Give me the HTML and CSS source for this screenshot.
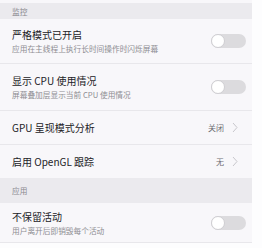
FILE: index.html
```html
<!DOCTYPE html>
<html lang="zh">
<head>
<meta charset="utf-8">
<link rel="stylesheet" href="styles.css">
</head>
<body>
<div class="page">
  <div class="list">
    <div class="top-gap"></div>
    <div class="section h1">监控</div>
    <div class="row r-tall">
      <div class="texts">
        <div class="title">严格模式已开启</div>
        <div class="sub">应用在主线程上执行长时间操作时闪烁屏幕</div>
      </div>
      <div class="toggle"><span class="knob"></span></div>
    </div>
    <div class="row r-tall2">
      <div class="texts">
        <div class="title">显示 CPU 使用情况</div>
        <div class="sub">屏幕叠加层显示当前 CPU 使用情况</div>
      </div>
      <div class="toggle"><span class="knob"></span></div>
    </div>
    <div class="row r-short">
      <div class="texts"><div class="title">GPU 呈现模式分析</div></div>
      <div class="value">关闭</div>
      <svg class="chev" viewBox="0 0 6 11" width="6" height="11"><path d="M1 1 L5 5.5 L1 10" fill="none" stroke="#c8c7cc" stroke-width="1"/></svg>
    </div>
    <div class="row r-short2 noborder">
      <div class="texts"><div class="title">启用 OpenGL 跟踪</div></div>
      <div class="value">无</div>
      <svg class="chev" viewBox="0 0 6 11" width="6" height="11"><path d="M1 1 L5 5.5 L1 10" fill="none" stroke="#c8c7cc" stroke-width="1"/></svg>
    </div>
    <div class="section h2">应用</div>
    <div class="row r-last">
      <div class="texts">
        <div class="title">不保留活动</div>
        <div class="sub">用户离开后即销毁每个活动</div>
      </div>
      <div class="toggle"><span class="knob"></span></div>
    </div>
  </div>
</div>
</body>
</html>
```
FILE: styles.css
```css
html, body {
  margin: 0;
  padding: 0;
  background: #fdfdfe;
}
body {
  font-family: "Noto Sans CJK SC", "Noto Sans", sans-serif;
  width: 262px;
  height: 248px;
  overflow: hidden;
}
.page {
  display: flex;
}
.list {
  width: 252px;
  background: #f8f7fa;
  display: flex;
  flex-direction: column;
}
.top-gap {
  height: 3px;
}
.section {
  background: #ebeaee;
  color: #8a898e;
  font-size: 7.7px;
  padding-left: 12px;
  display: flex;
  align-items: center;
}
.h1 { height: 16px; }
.h2 { height: 25px; }
.row {
  display: flex;
  align-items: center;
  padding: 0 16px 0 12px;
  border-bottom: 1px solid #e8e7eb;
  box-sizing: border-box;
}
.row.noborder { border-bottom: none; }
.r-tall { height: 45px; }
.r-tall2 { height: 47px; }
.r-short { height: 34px; }
.r-short2 { height: 33px; }
.r-last { height: 40px; }
.texts {
  flex: 1;
  display: flex;
  flex-direction: column;
  gap: 3px;
}
.title {
  font-size: 10px;
  color: #222226;
  line-height: 13px;
}
.sub {
  font-size: 7.7px;
  color: #8e8d92;
  line-height: 10px;
  white-space: nowrap;
}
.toggle {
  width: 35px;
  height: 14px;
  border-radius: 7px;
  background: #dcdbde;
  position: relative;
  flex: none;
  margin-right: -10px;
}
.knob {
  position: absolute;
  left: 0;
  top: 0;
  width: 14px;
  height: 14px;
  box-sizing: border-box;
  border-radius: 50%;
  background: #ffffff;
  border: 1px solid #cfced2;
}
.value {
  font-size: 8px;
  color: #6f6e73;
  margin-right: 8px;
}
.chev {
  flex: none;
  margin-right: -2px;
}
```
